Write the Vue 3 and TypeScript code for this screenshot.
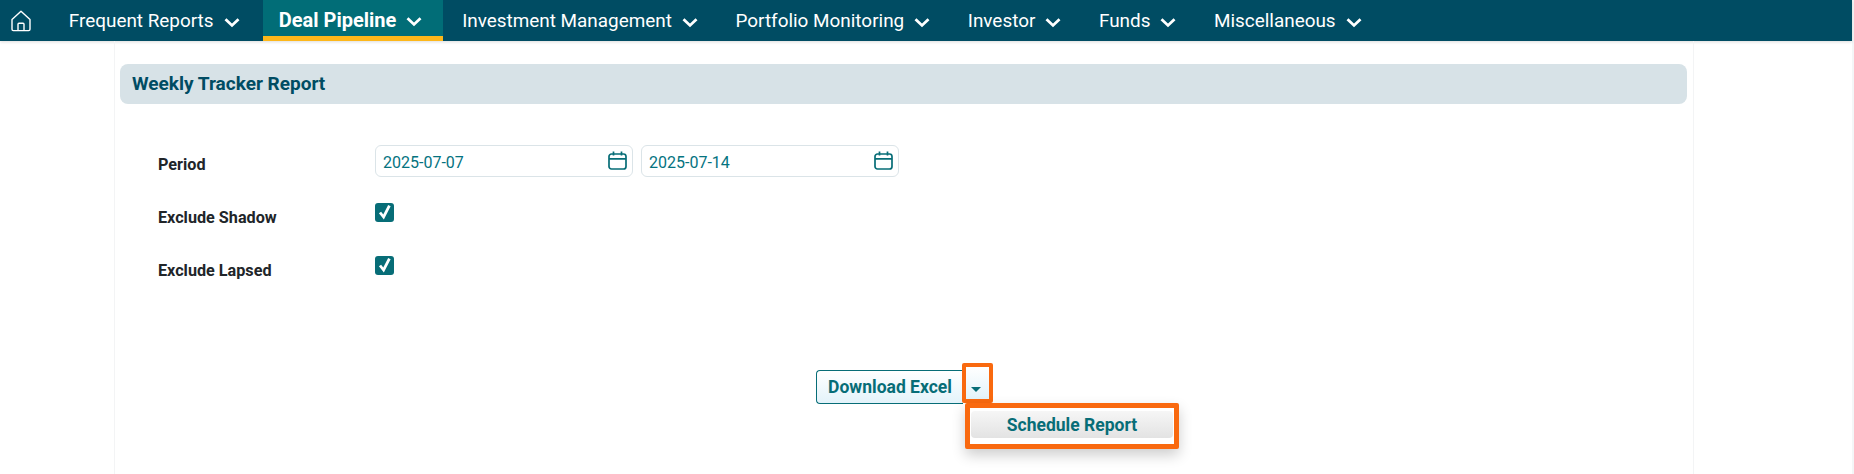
<script setup lang="ts">
const items: { label: string; active?: boolean }[] = [
  { label: 'Frequent Reports' },
  { label: 'Deal Pipeline', active: true },
  { label: 'Investment Management' },
  { label: 'Portfolio Monitoring' },
  { label: 'Investor' },
  { label: 'Funds' },
  { label: 'Miscellaneous' },
]
const dates = ['2025-07-07', '2025-07-14']
const checks = ['Exclude Shadow', 'Exclude Lapsed']
</script>

<template>
  <div class="page">
    <nav class="nav">
      <a class="home">
        <svg width="20" height="22" viewBox="0 0 20 22" fill="none" stroke="#fff" stroke-width="1.4" stroke-linejoin="round">
          <path d="M1 9.6 10 1.2l9 8.4v9.6a1.4 1.4 0 0 1-1.4 1.4H2.4A1.4 1.4 0 0 1 1 19.2z" />
          <path d="M7 20.6v-6.4a1 1 0 0 1 1-1h4a1 1 0 0 1 1 1v6.4" />
        </svg>
      </a>
      <a v-for="item in items" :key="item.label" class="item" :class="{ active: item.active }">
        <span>{{ item.label }}</span>
        <svg class="chev" width="16" height="11" viewBox="0 0 16 11" fill="none" stroke="#fff" stroke-width="2.8">
          <path d="M1.5 2.2 8 8.4 14.5 2.2" />
        </svg>
      </a>
    </nav>

    <main class="card">
      <header class="title">Weekly Tracker Report</header>
      <section class="form">
        <div class="row">
          <label class="label">Period</label>
          <div class="dates">
            <div v-for="d in dates" :key="d" class="date">
              <span class="date-text">{{ d }}</span>
              <svg width="19" height="19" viewBox="0 0 19 19" fill="none" stroke="#076d77" stroke-width="1.7">
                <rect x="1" y="3" width="17" height="15" rx="2.5" />
                <path d="M1 7.8h17M5.5 0.6v4M13.5 0.6v4" />
              </svg>
            </div>
          </div>
        </div>
        <div v-for="c in checks" :key="c" class="row">
          <label class="label">{{ c }}</label>
          <span class="check">
            <svg width="19" height="19" viewBox="0 0 19 19" fill="none" stroke="#fff" stroke-width="2.8">
              <path d="M5 9.5 8.6 14 14.4 2.6" />
            </svg>
          </span>
        </div>
      </section>
      <div class="actions">
        <div class="split">
          <button class="download">Download Excel</button>
          <button class="caret"><i></i></button>
          <div class="menu">
            <div class="menu-item">Schedule Report</div>
          </div>
        </div>
      </div>
    </main>
  </div>
</template>

<style>
html, body { margin: 0; background: #fff; overflow: hidden; }
</style>

<style scoped>
.page {
  width: 1852px;
  height: 474px;
  font-family: Roboto, "Liberation Sans", sans-serif;
  border-right: 2px solid #f4f6f7;
}
.nav {
  display: flex;
  height: 41px;
  background: #004c63;
  box-shadow: 0 1px 3px rgba(0, 0, 0, 0.14);
  color: #fff;
}
.home {
  display: flex;
  align-items: center;
  width: 50px;
  padding-left: 11px;
  box-sizing: border-box;
}
.item {
  display: flex;
  align-items: center;
  gap: 10px;
  padding: 0 18.8px;
  font-size: 18.9px;
  box-sizing: border-box;
}
.item.active {
  background: #016d77;
  font-size: 20px;
  font-weight: 700;
  border-bottom: 5px solid #fdb71a;
  padding: 3px 21px 0 16px;
  margin-left: 4.4px;
}
.chev { margin-top: 3px; }
.card {
  position: relative;
  width: 1580px;
  height: 433px;
  margin-left: 114px;
  padding: 23px 5px 0;
  box-sizing: border-box;
  border-left: 1px solid #f3f4f5;
  border-right: 1px solid #f3f4f5;
}
.title {
  height: 40px;
  line-height: 39px;
  padding-left: 12px;
  width: 1567px;
  box-sizing: border-box;
  background: #d7e2e7;
  border-radius: 8px;
  color: #004c63;
  font-size: 19px;
  font-weight: 700;
}
.form {
  padding: 41px 0 0 37px;
  display: flex;
  flex-direction: column;
  gap: 21px;
}
.row {
  display: flex;
  height: 32px;
}
.label {
  width: 217px;
  padding: 10px 0 0 1px;
  font-size: 16.2px;
  font-weight: 700;
  color: #212529;
}
.dates { display: flex; gap: 8px; }
.date {
  width: 258px;
  height: 32px;
  box-sizing: border-box;
  display: flex;
  align-items: center;
  justify-content: space-between;
  padding: 0 5px 1px 7px;
  border: 1px solid #dbe4e8;
  border-radius: 6px;
  color: #05737f;
  font-size: 16px;
}
.date-text { padding-top: 4px; }
.check {
  width: 19px;
  height: 19px;
  margin-top: 5px;
  background: #076d77;
  border-radius: 3px;
  display: block;
}
.check svg { display: block; }
.actions {
  display: flex;
  padding: 87px 0 0 696px;
}
.split { position: relative; display: flex; align-items: flex-start; height: 34px; }
.download {
  width: 147px;
  height: 34px;
  padding: 0;
  border: 1px solid #076d77;
  border-right: 0;
  border-radius: 4px 0 0 4px;
  background: linear-gradient(#fff, #e3f3fa);
  color: #076d77;
  font: 700 17.5px Roboto, sans-serif;
}
.caret {
  position: relative;
  box-sizing: content-box;
  width: 23px;
  height: 32px;
  padding: 0;
  margin: -7px 0 0 -1px;
  background: linear-gradient(#fff, #e3f3fa);
  border: 4px solid #f9690f;
  border-radius: 2px;
}
.caret i {
  position: absolute;
  left: 5px;
  top: 20px;
  border: 5px solid transparent;
  border-top-color: #076d77;
  border-bottom: 0;
}
.menu {
  position: absolute;
  left: 149px;
  top: 33px;
  width: 214px;
  height: 46px;
  box-sizing: border-box;
  border: 5px solid #f9690f;
  border-radius: 2px;
  background: #fff;
  box-shadow: 0 6px 14px rgba(0, 0, 0, 0.2);
  padding: 3px 1px;
}
.menu-item {
  height: 27px;
  line-height: 29px;
  text-align: center;
  border-radius: 4px;
  background: linear-gradient(#f6f6f6, #e3e3e3);
  color: #076d77;
  font-size: 17.5px;
  font-weight: 700;
}
</style>
